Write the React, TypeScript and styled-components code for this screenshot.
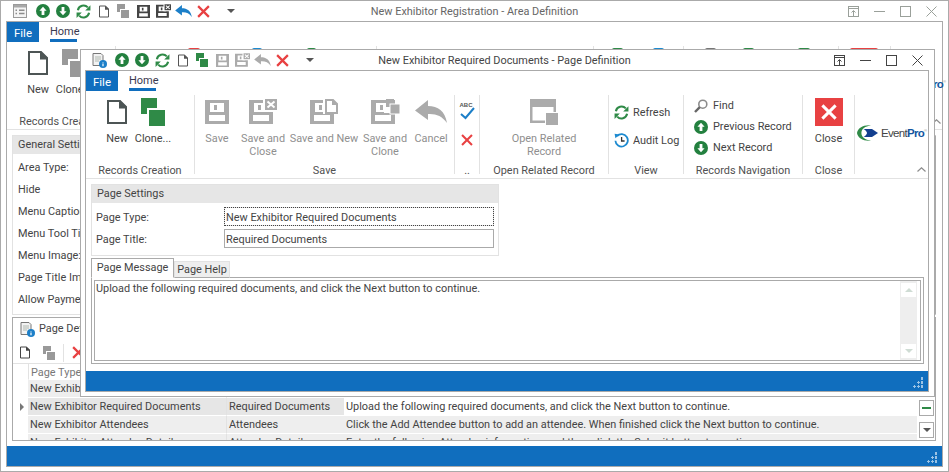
import React from 'react';
import styled, { createGlobalStyle } from 'styled-components';

const BLUE = '#106ebe';
const GREEN = '#2f8a47';
const RED = '#e84142';
const GRAY = '#ababab';
const LINE = '#aaaaaa';
const SOFT = '#e2e2e2';

const GlobalStyle = createGlobalStyle`
  html, body { margin: 0; padding: 0; background: #fff; }
  body { font-family: Roboto, "Liberation Sans", sans-serif; font-size: 10.9px; color: #444; }
  * { box-sizing: border-box; }
`;

/* ---------- icons ---------- */

const DocIcon = ({ w = 20, h = 24, color = '#4d5555' }: { w?: number; h?: number; color?: string }) => (
  <svg width={w} height={h} viewBox="0 0 20 24">
    <path d="M1 1H13L19 7V23H1Z" fill="#fff" stroke={color} strokeWidth="2" />
    <path d="M12 0L20 7V8.5H12Z" fill={color} />
  </svg>
);

const CloneIcon = ({ w = 24, h = 28, color = GREEN }: { w?: number; h?: number; color?: string }) => (
  <svg width={w} height={h} viewBox="0 0 24 28">
    <rect x="0" y="0" width="16" height="16" fill={color} />
    <rect x="7" y="11" width="18" height="18" fill={color} stroke="#fff" strokeWidth="2" />
  </svg>
);

const DISK = 'M0 0H24V24H0ZM5 3V12H19V3ZM9 5V10H12V5ZM4 15V21H20V15Z';

const SaveIcon = ({ s = 24, color = GRAY }: { s?: number; color?: string }) => (
  <svg width={s} height={s} viewBox="0 0 24 24">
    <path d={DISK} fill={color} fillRule="evenodd" />
  </svg>
);

const SaveCloseIcon = ({ w = 28, h = 25, color = GRAY }: { w?: number; h?: number; color?: string }) => (
  <svg width={w} height={h} viewBox="0 0 28 25">
    <path d={DISK} fill={color} fillRule="evenodd" transform="translate(0 1)" />
    <rect x="14" y="0" width="14" height="13" fill="#fff" />
    <rect x="16" y="0" width="12" height="11" fill={color} />
    <path d="M18.5 2.5L25.5 8.5M25.5 2.5L18.5 8.5" stroke="#fff" strokeWidth="2" />
  </svg>
);

const SaveNewIcon = () => (
  <svg width="28" height="25" viewBox="0 0 28 25">
    <path d={DISK} fill={GRAY} fillRule="evenodd" transform="translate(0 1)" />
    <path d="M13 0H28V15H13Z" fill="#fff" />
    <path d="M16 1H23L27 5V14H16Z" fill="#fff" stroke={GRAY} strokeWidth="2" />
    <path d="M22 0L28 6H22Z" fill={GRAY} />
  </svg>
);

const SaveCloneIcon = () => (
  <svg width="29" height="25" viewBox="0 0 29 25">
    <path d={DISK} fill={GRAY} fillRule="evenodd" transform="translate(0 1)" />
    <rect x="13" y="4" width="9" height="10" fill="#fff" />
    <rect x="15" y="0" width="8" height="8" fill={GRAY} />
    <rect x="19" y="5" width="10" height="10" fill={GRAY} stroke="#fff" strokeWidth="1" />
  </svg>
);

const ArrowCircle = ({ s = 14, dir }: { s?: number; dir: 'up' | 'down' }) => (
  <svg width={s} height={s} viewBox="0 0 14 14">
    <circle cx="7" cy="7" r="7" fill="#23803f" />
    <path
      d="M7 2.8L10.6 6.8H8.4V11H5.6V6.8H3.4Z"
      fill="#fff"
      transform={dir === 'down' ? 'rotate(180 7 7)' : undefined}
    />
  </svg>
);

const RefreshIcon = ({ s = 15 }: { s?: number }) => (
  <svg width={s} height={s} viewBox="0 0 16 16" fill="none">
    <path d="M2 6.6A6.2 6.2 0 0 1 12.6 3.6" stroke={GREEN} strokeWidth="2.2" />
    <path d="M15.4 1.2V7H9.8Z" fill={GREEN} />
    <path d="M14 9.4A6.2 6.2 0 0 1 3.4 12.4" stroke={GREEN} strokeWidth="2.2" />
    <path d="M0.6 14.8V9H6.2Z" fill={GREEN} />
  </svg>
);

const AuditIcon = () => (
  <svg width="15" height="15" viewBox="0 0 15 15" fill="none">
    <path d="M3 3.2A6.2 6.2 0 1 1 1.4 7.8" stroke="#1c8ad0" strokeWidth="1.8" />
    <path d="M0.6 0.8L5.4 1.4L1.4 5.2Z" fill="#1c8ad0" />
    <path d="M7.6 4V8H10.6" stroke="#333" strokeWidth="1.3" />
  </svg>
);

const FindIcon = () => (
  <svg width="14" height="14" viewBox="0 0 14 14" fill="none">
    <circle cx="8.8" cy="5.2" r="4" stroke="#8b8b8b" strokeWidth="1.6" />
    <path d="M5.8 8.2L1 13" stroke="#666" strokeWidth="2.4" />
  </svg>
);

const CrossIcon = ({ s = 14, color = RED, weight = 2.4 }: { s?: number; color?: string; weight?: number }) => (
  <svg width={s} height={s} viewBox="0 0 14 14">
    <path d="M1.2 1.2L12.8 12.8M12.8 1.2L1.2 12.8" stroke={color} strokeWidth={weight} />
  </svg>
);

const ReplyIcon = ({ w = 17, h = 12, color = GRAY }: { w?: number; h?: number; color?: string }) => (
  <svg width={w} height={h} viewBox="0 0 32 23">
    <path d="M13 0L0 10.5L13 20V14C21 13.5 27 16 32 23C30 11 23 6 13 6Z" fill={color} />
  </svg>
);

const ListIcon = () => (
  <svg width="14" height="14" viewBox="0 0 14 14" fill="none">
    <rect x="0.5" y="0.5" width="13" height="13" fill="#f4f4f4" stroke="#9a9a9a" />
    <rect x="1" y="1" width="12" height="2.5" fill="#a8a8a8" />
    <path d="M2.5 6.2H4M2.5 9.5H4M6 6.2H11.5M6 9.5H11.5" stroke="#8c8c8c" strokeWidth="1.4" />
  </svg>
);

const InfoDocIcon = () => (
  <svg width="15" height="15" viewBox="0 0 15 15" fill="none">
    <path d="M1 .5H9L11 2.5V12.5H1Z" fill="#f2f2f2" stroke="#777" />
    <path d="M3 4H9M3 6H9M3 8H7" stroke="#b0b8b0" strokeWidth="1" />
    <circle cx="11" cy="11" r="4" fill="#1c7fc8" />
    <path d="M11 9.6V9M11 10.6V13.2" stroke="#fff" strokeWidth="1.2" />
  </svg>
);

const RestoreIcon = ({ color }: { color: string }) => (
  <svg width="11" height="11" viewBox="0 0 11 11" fill="none">
    <rect x=".5" y=".5" width="10" height="10" stroke={color} />
    <path d="M0 2.5H11M5.5 10V5M3.5 6.5L5.5 4.5L7.5 6.5" stroke={color} />
  </svg>
);

const MinIcon = ({ color }: { color: string }) => (
  <svg width="11" height="11" viewBox="0 0 11 11"><path d="M0 5.5H11" stroke={color} /></svg>
);

const MaxIcon = ({ color }: { color: string }) => (
  <svg width="11" height="11" viewBox="0 0 11 11" fill="none"><rect x=".5" y=".5" width="10" height="10" stroke={color} /></svg>
);

const CloseGlyph = ({ color }: { color: string }) => (
  <svg width="11" height="11" viewBox="0 0 11 11"><path d="M.5 .5L10.5 10.5M10.5 .5L.5 10.5" stroke={color} /></svg>
);

const Chevron = () => (
  <svg width="9" height="5" viewBox="0 0 9 5" fill="none">
    <path d="M.5 4.5L4.5 .8L8.5 4.5" stroke="#8c8c8c" strokeWidth="1.2" />
  </svg>
);

const CaretDown = ({ color = '#555' }: { color?: string }) => (
  <svg width="8" height="4" viewBox="0 0 8 4"><path d="M0 0H8L4 4Z" fill={color} /></svg>
);

const OpenRelatedIcon = () => (
  <svg width="28" height="26" viewBox="0 0 28 26">
    <rect x="0" y="0" width="26" height="24" fill={GRAY} />
    <rect x="2.5" y="8" width="21" height="13.5" fill="#fff" />
    <rect x="15" y="13" width="13" height="13" fill="#fff" />
    <rect x="16" y="14" width="12" height="12" fill={GRAY} />
  </svg>
);

const SpellIcon = () => (
  <svg width="15" height="17" viewBox="0 0 15 17" fill="none">
    <path d="M1 11L5.5 15L14 5" stroke="#1c7fc8" strokeWidth="2" />
  </svg>
);

const Swoosh = () => (
  <svg width="22" height="16" viewBox="0 0 22 16">
    <path d="M14 .4C7 -.6 .5 3 0 8C.5 13 7 16.6 14 15.6C8 15 4.4 12 4.4 8C4.4 4 8 1 14 .4Z" fill="#2f8a47" />
    <path d="M6.5 4H15L21 8L15 12H6.5C9 10.5 10 9 10 8C10 7 9 5.5 6.5 4Z" fill="#123f8f" />
  </svg>
);

/* ---------- window chrome ---------- */

const Page = styled.div`
  position: relative;
  width: 949px;
  height: 472px;
  overflow: hidden;
  display: flex;
  flex-direction: column;
  padding: 0 5px 4px;
  border: 1px solid ${LINE};
  background: #fff;
`;

const Modal = styled.div`
  position: absolute;
  left: 79px;
  top: 48px;
  width: 855px;
  height: 348px;
  display: flex;
  flex-direction: column;
  padding: 0 5px 4px 4px;
  border: 1px solid ${LINE};
  background: #fff;
`;

const TitleBar = styled.div`
  height: 20px;
  flex: none;
  display: grid;
  grid-template-columns: 1fr auto 1fr;
  align-items: center;
`;

const Quick = styled.div`
  display: flex;
  align-items: center;
  padding-left: 4px;
`;

const QuickSlot = styled.div<{ $w?: number; $ml?: number }>`
  width: ${(p) => p.$w ?? 20}px;
  margin-left: ${(p) => p.$ml ?? 0}px;
  height: 20px;
  display: flex;
  align-items: center;
  justify-content: center;
`;

const WinTitle = styled.div<{ $dim?: boolean }>`
  color: ${(p) => (p.$dim ? '#666' : '#444')};
  white-space: nowrap;
  margin-left: ${(p) => (p.$dim ? 0 : -5)}px;
`;

const WinButtons = styled.div`
  display: flex;
  justify-content: flex-end;
  align-items: center;
  gap: 15px;
  padding-right: 6px;
`;

const Frame = styled.div`
  flex: 1;
  min-height: 0;
  display: flex;
  flex-direction: column;
  border: 1px solid ${LINE};
  background: #fff;
`;

const TabStrip = styled.div`
  height: 20px;
  flex: none;
  display: flex;
`;

const FileTab = styled.div`
  width: 32px;
  padding-top: 1px;
  background: ${BLUE};
  color: #fff;
  font-size: 11.5px;
  display: flex;
  align-items: center;
  justify-content: center;
`;

const HomeTab = styled.div`
  margin-left: 11px;
  width: 27px;
  height: 20px;
  border-bottom: 3px solid ${BLUE};
  color: #3a3a50;
  font-size: 11px;
  line-height: 20px;
  text-align: center;
  white-space: nowrap;
`;

const StatusBar = styled.div`
  height: 20px;
  flex: none;
  background: ${BLUE};
  display: flex;
  justify-content: flex-end;
  align-items: flex-end;
  padding: 0 4px 3px 0;
`;

const Grip = styled.div`
  width: 11px;
  height: 11px;
  background:
    radial-gradient(circle at 9px 1.5px, #9cc3e4 1.2px, transparent 1.3px),
    radial-gradient(circle at 5.5px 5.5px, #9cc3e4 1.2px, transparent 1.3px),
    radial-gradient(circle at 9px 5.5px, #9cc3e4 1.2px, transparent 1.3px),
    radial-gradient(circle at 1.5px 9.5px, #9cc3e4 1.2px, transparent 1.3px),
    radial-gradient(circle at 5.5px 9.5px, #9cc3e4 1.2px, transparent 1.3px),
    radial-gradient(circle at 9px 9.5px, #9cc3e4 1.2px, transparent 1.3px);
`;

/* ---------- ribbon ---------- */

const Ribbon = styled.div`
  position: relative;
  height: 88px;
  flex: none;
  display: flex;
  align-items: flex-start;
  padding-top: 4px;
  border-bottom: 1px solid ${SOFT};
`;

const Group = styled.div<{ $w: number; $plain?: boolean }>`
  width: ${(p) => p.$w}px;
  height: 79px;
  flex: none;
  display: flex;
  flex-direction: column;
  border-right: ${(p) => (p.$plain ? 'none' : `1px solid ${SOFT}`)};
`;

const GroupBody = styled.div<{ $pl?: number; $center?: boolean }>`
  height: 68px;
  display: flex;
  padding-left: ${(p) => p.$pl ?? 0}px;
  justify-content: ${(p) => (p.$center ? 'center' : 'flex-start')};
`;

const GroupLabel = styled.div`
  height: 11px;
  line-height: 16px;
  text-align: center;
  color: #505050;
  white-space: nowrap;
`;

const BigButton = styled.div<{ $w: number; $off?: boolean }>`
  width: ${(p) => p.$w}px;
  flex: none;
  display: flex;
  flex-direction: column;
  align-items: center;
  color: ${(p) => (p.$off ? '#8f8f8f' : '#444')};
`;

const BigIcon = styled.div`
  height: 33px;
  margin-bottom: 4px;
  display: flex;
  align-items: center;
  justify-content: center;
`;

const BigText = styled.div`
  line-height: 13px;
  text-align: center;
  white-space: nowrap;
`;

const SmallColumn = styled.div<{ $pl: number; $mt: number; $row: number }>`
  display: grid;
  grid-auto-rows: ${(p) => p.$row}px;
  margin-top: ${(p) => p.$mt}px;
  padding-left: ${(p) => p.$pl}px;
`;

const SmallButton = styled.div<{ $gap: number; $iw: number }>`
  display: grid;
  grid-template-columns: ${(p) => p.$iw}px auto;
  column-gap: ${(p) => p.$gap}px;
  align-items: center;
  white-space: nowrap;
`;

const SpellColumn = styled.div`
  width: 100%;
  display: flex;
  flex-direction: column;
  align-items: center;
`;

const SpellBox = styled.div`
  position: relative;
  height: 30px;
  margin-top: 8px;
`;

const SpellText = styled.span`
  position: absolute;
  left: 0;
  top: -1px;
  font-family: "Liberation Sans", sans-serif;
  font-size: 6px;
  font-weight: 700;
  color: #555;
`;

const SpellCross = styled.div`
  margin-top: 1px;
`;

const BigClose = styled.div`
  width: 28px;
  height: 28px;
  background: ${RED};
  display: flex;
  align-items: center;
  justify-content: center;
`;

const LogoBox = styled.div`
  display: flex;
  align-items: center;
  gap: 2px;
  padding: 30px 0 0 2px;
`;

const LogoText = styled.span`
  font-family: "Liberation Sans", sans-serif;
  font-size: 11.5px;
  letter-spacing: -0.7px;
  color: #444;
  white-space: nowrap;
  b { color: #14559f; font-weight: 700; }
  sup { font-size: 4px; color: #888; }
`;

const Collapse = styled.div`
  position: absolute;
  right: 2px;
  bottom: 6px;
  display: flex;
`;

/* the background ribbon is hidden by the dialog except for the top edge of its parts */
const PeekRow = styled.div`
  display: flex;
  align-items: flex-start;
  height: 60px;
`;

const PeekSep = styled.div<{ $ml: number }>`
  width: 1px;
  height: 20px;
  margin-left: ${(p) => p.$ml}px;
  background: ${SOFT};
  flex: none;
`;

const PeekCap = styled.div<{ $ml: number; $w: number; $c: string }>`
  width: ${(p) => p.$w}px;
  height: 6px;
  margin: 2px 0 0 ${(p) => p.$ml}px;
  background: ${(p) => p.$c};
  border-radius: 2px 2px 0 0;
  flex: none;
`;

const PeekLogo = styled.div`
  margin-left: -17px;
  flex: none;
`;

const BgCollapse = styled.div`
  position: absolute;
  right: 1px;
  bottom: 5px;
  display: flex;
`;

/* ---------- background form ---------- */

const BgContent = styled.div`
  flex: 1;
  min-height: 0;
  display: flex;
  flex-direction: column;
  gap: 2px;
  padding: 5px 6px 5px 5px;
`;

const BgGroup = styled.div`
  height: 180px;
  flex: none;
  border: 1px solid ${SOFT};
  border-right-color: ${LINE};
`;

const GroupHeader = styled.div`
  height: 18px;
  padding-left: 5px;
  line-height: 17px;
  background: #e6e6e6;
  color: #444;
`;

const FieldLabels = styled.div`
  display: grid;
  grid-auto-rows: 21.9px;
  padding: 3px 0 0 5px;
  align-items: center;
  white-space: nowrap;
`;

const Panel = styled.div`
  flex: 1;
  min-height: 0;
  overflow: hidden;
  border: 1px solid ${LINE};
  display: flex;
  flex-direction: column;
`;

const PanelTitle = styled.div`
  height: 24px;
  flex: none;
  display: flex;
  align-items: flex-start;
  gap: 4px;
  padding: 4px 0 0 7px;
  line-height: 13px;
`;

const PanelTools = styled.div`
  height: 22px;
  flex: none;
  display: flex;
  align-items: center;
  padding-left: 7px;
  border-bottom: 1px solid ${SOFT};
`;

const ToolSep = styled.div`
  width: 1px;
  height: 18px;
  margin: 0 8px 0 7px;
  background: ${SOFT};
`;

const ToolSlot = styled.div<{ $w: number }>`
  width: ${(p) => p.$w}px;
  display: flex;
  align-items: center;
`;

const GridWrap = styled.div`
  flex: 1;
  min-height: 0;
  display: flex;
`;

const GridTable = styled.div`
  flex: 1;
  min-width: 0;
  display: grid;
  grid-template-columns: 15px 198px 118px 1fr;
  grid-template-rows: 16px;
  grid-auto-rows: 18px;
  align-content: start;
`;

const Cell = styled.div<{ $bg?: string; $dim?: boolean; $left?: boolean }>`
  background: ${(p) => p.$bg ?? '#fff'};
  color: ${(p) => (p.$dim ? '#777' : '#444')};
  border-bottom: 1px solid #fff;
  border-left: ${(p) => (p.$left ? `1px solid ${SOFT}` : 'none')};
  padding-left: 2px;
  line-height: 18px;
  white-space: nowrap;
  overflow: hidden;
`;

const RowMark = styled.div`
  display: flex;
  align-items: center;
  justify-content: center;
  padding-left: 2px;
`;

const Triangle = styled.div`
  width: 0;
  height: 0;
  border-left: 4px solid #777;
  border-top: 4px solid transparent;
  border-bottom: 4px solid transparent;
`;

const SideButtons = styled.div`
  width: 18px;
  flex: none;
  display: flex;
  flex-direction: column;
  gap: 6px;
  padding: 36px 0 0 2px;
`;

const SideButton = styled.div`
  width: 15px;
  height: 16px;
  flex: none;
  border: 1px solid ${LINE};
  background: #fff;
  display: flex;
  align-items: center;
  justify-content: center;
`;

const MinusBar = styled.div`
  width: 9px;
  height: 2px;
  background: ${GREEN};
`;

/* ---------- dialog body ---------- */

const ModalBody = styled.div`
  flex: 1;
  min-height: 0;
  display: flex;
  flex-direction: column;
  padding: 5px 4px 6px 5px;
`;

const SettingsBox = styled.div`
  width: 408px;
  height: 72px;
  flex: none;
  border: 1px solid ${SOFT};
`;

const SettingRows = styled.div`
  display: grid;
  grid-template-columns: 128px 270px;
  grid-auto-rows: 22px;
  padding: 4px 0 0 4px;
`;

const RowLabel = styled.div`
  line-height: 21px;
`;

const TextBox = styled.div<{ $focus?: boolean }>`
  height: 19px;
  padding-left: 1px;
  line-height: 19px;
  border: 1px solid ${(p) => (p.$focus ? SOFT : LINE)};
  outline: ${(p) => (p.$focus ? '1px dotted #444' : 'none')};
  outline-offset: -1px;
  white-space: nowrap;
`;

const TabRow = styled.div`
  height: 20px;
  flex: none;
  margin-top: 2px;
  display: flex;
  align-items: flex-end;
  position: relative;
  z-index: 1;
`;

const PageTab = styled.div<{ $active?: boolean }>`
  height: ${(p) => (p.$active ? 20 : 17)}px;
  width: ${(p) => (p.$active ? 83 : 56)}px;
  text-align: center;
  line-height: ${(p) => (p.$active ? 17 : 15)}px;
  background: ${(p) => (p.$active ? '#fff' : '#eeeeee')};
  border: 1px solid ${(p) => (p.$active ? LINE : SOFT)};
  border-bottom: ${(p) => (p.$active ? '1px solid #fff' : `1px solid ${LINE}`)};
  white-space: nowrap;
`;

const Memo = styled.div`
  width: 833px;
  height: 87px;
  flex: none;
  margin-top: -1px;
  padding: 2px;
  border: 1px solid ${LINE};
`;

const MemoInner = styled.div`
  height: 100%;
  display: flex;
  border: 1px solid ${LINE};
`;

const MemoText = styled.div`
  flex: 1;
  padding: 1px 1px 0;
  line-height: 14px;
  white-space: nowrap;
`;

const ScrollTrack = styled.div`
  width: 17px;
  flex: none;
  margin-right: 3px;
  background: #eeeeee;
  display: flex;
  flex-direction: column;
  justify-content: space-between;
  padding: 2px 1px;
`;

const ScrollBtn = styled.div<{ $down?: boolean }>`
  height: 14px;
  background: #fff;
  display: flex;
  align-items: center;
  justify-content: center;
  svg { transform: ${(p) => (p.$down ? 'none' : 'rotate(180deg)')}; }
`;

/* ---------- pieces used twice ---------- */

const QuickBar = ({ dialog }: { dialog?: boolean }) => (
  <Quick>
    <QuickSlot>{dialog ? <InfoDocIcon /> : <ListIcon />}</QuickSlot>
    <QuickSlot $ml={3}><ArrowCircle dir="up" /></QuickSlot>
    <QuickSlot><ArrowCircle dir="down" /></QuickSlot>
    <QuickSlot><RefreshIcon /></QuickSlot>
    <QuickSlot $ml={1}><DocIcon w={10} h={13} color="#555" /></QuickSlot>
    <QuickSlot $ml={-1}><CloneIcon w={12} h={14} color={dialog ? GREEN : '#999'} /></QuickSlot>
    <QuickSlot>
      <SaveIcon s={13} color={dialog ? GRAY : '#444'} />
    </QuickSlot>
    <QuickSlot>
      {dialog ? <SaveCloseIcon w={15} h={14} /> : <SaveCloseIcon w={15} h={14} color="#444" />}
    </QuickSlot>
    <QuickSlot><ReplyIcon color={dialog ? GRAY : '#1c7fc8'} /></QuickSlot>
    <QuickSlot><CrossIcon s={13} /></QuickSlot>
    <QuickSlot $ml={12} $w={12}><CaretDown /></QuickSlot>
  </Quick>
);

const Buttons = ({ color }: { color: string }) => (
  <WinButtons>
    <RestoreIcon color={color} />
    <MinIcon color={color} />
    <MaxIcon color={color} />
    <CloseGlyph color={color} />
  </WinButtons>
);

const Logo = () => (
  <LogoBox>
    <Swoosh />
    <LogoText>Event<b>Pro</b><sup>®</sup></LogoText>
  </LogoBox>
);

const peeks = [
  { sep: true, ml: 0 },
  { ml: 72, w: 12, c: RED },
  { ml: 52, w: 10, c: '#1c8ad0' },
  { ml: 45, w: 9, c: GREEN },
  { sep: true, ml: 60 },
  { sep: true, ml: 216 },
  { ml: 18, w: 11, c: GREEN },
  { ml: 30, w: 11, c: '#1c8ad0' },
  { sep: true, ml: 19 },
  { ml: 21, w: 11, c: '#777' },
  { ml: 27, w: 11, c: GREEN },
  { ml: 44, w: 12, c: GREEN },
  { sep: true, ml: 28 },
  { ml: 11, w: 28, c: RED },
  { sep: true, ml: 12 },
];

const labels = ['Area Type:', 'Hide', 'Menu Caption:', 'Menu Tool Tip:', 'Menu Image:', 'Page Title Image:', 'Allow Payment:'];

const rows = [
  ['New Exhibitor Contact', 'Contact', 'Enter your contact information.', '#eeeeee', '#eeeeee'],
  ['New Exhibitor Required Documents', 'Required Documents', 'Upload the following required documents, and click the Next button to continue.', '#e6e6e6', '#fff'],
  ['New Exhibitor Attendees', 'Attendees', 'Click the Add Attendee button to add an attendee. When finished click the Next button to continue.', '#eeeeee', '#eeeeee'],
  ['New Exhibitor Attendee Details', 'Attendee Details', 'Enter the following Attendee information, and then click the Submit button to continue.', '#eeeeee', '#eeeeee'],
];

const App = () => (
  <>
    <GlobalStyle />
    <Page>
      <TitleBar>
        <QuickBar />
        <WinTitle $dim>New Exhibitor Registration - Area Definition</WinTitle>
        <Buttons color="#9aa09a" />
      </TitleBar>
      <Frame>
        <TabStrip>
          <FileTab>File</FileTab>
          <HomeTab>Home</HomeTab>
        </TabStrip>
        <Ribbon>
          <Group $w={108} $plain>
            <GroupBody $pl={14}>
              <BigButton $w={34}>
                <BigIcon><DocIcon /></BigIcon>
                <BigText>New</BigText>
              </BigButton>
              <BigButton $w={38}>
                <BigIcon><CloneIcon color="#999" /></BigIcon>
                <BigText>Clone...</BigText>
              </BigButton>
            </GroupBody>
            <GroupLabel>Records Creation</GroupLabel>
          </Group>
          <PeekRow>
            {peeks.map((p, i) => (p.sep
              ? <PeekSep key={i} $ml={p.ml} />
              : <PeekCap key={i} $ml={p.ml} $w={p.w as number} $c={p.c as string} />))}
            <PeekLogo><Logo /></PeekLogo>
          </PeekRow>
          <BgCollapse><Chevron /></BgCollapse>
        </Ribbon>
        <BgContent>
          <BgGroup>
            <GroupHeader>General Settings</GroupHeader>
            <FieldLabels>
              {labels.map((l) => <div key={l}>{l}</div>)}
            </FieldLabels>
          </BgGroup>
          <Panel>
            <PanelTitle>
              <InfoDocIcon />
              <span>Page Definitions</span>
            </PanelTitle>
            <PanelTools>
              <ToolSlot $w={23}><DocIcon w={10} h={13} color="#444" /></ToolSlot>
              <ToolSlot $w={13}><CloneIcon w={12} h={14} color="#999" /></ToolSlot>
              <ToolSep />
              <CrossIcon s={13} />
            </PanelTools>
            <GridWrap>
              <GridTable>
                <div />
                <Cell $dim $left>Page Type</Cell>
                <Cell $dim>Page Title</Cell>
                <Cell $dim>Page Message</Cell>
                {rows.map((r, i) => (
                  <React.Fragment key={r[0]}>
                    <RowMark>{i === 1 ? <Triangle /> : null}</RowMark>
                    <Cell $bg={r[3]}>{r[0]}</Cell>
                    <Cell $bg={r[3]} $left>{r[1]}</Cell>
                    <Cell $bg={r[4]}>{r[2]}</Cell>
                  </React.Fragment>
                ))}
              </GridTable>
              <SideButtons>
                <SideButton><MinusBar /></SideButton>
                <SideButton><CaretDown /></SideButton>
              </SideButtons>
            </GridWrap>
          </Panel>
        </BgContent>
        <StatusBar><Grip /></StatusBar>
      </Frame>

      <Modal>
        <TitleBar>
          <QuickBar dialog />
          <WinTitle>New Exhibitor Required Documents - Page Definition</WinTitle>
          <Buttons color="#444" />
        </TitleBar>
        <Frame>
          <TabStrip>
            <FileTab>File</FileTab>
            <HomeTab>Home</HomeTab>
          </TabStrip>
          <Ribbon>
            <Group $w={109}>
              <GroupBody $pl={14}>
                <BigButton $w={34}>
                  <BigIcon><DocIcon /></BigIcon>
                  <BigText>New</BigText>
                </BigButton>
                <BigButton $w={38}>
                  <BigIcon><CloneIcon /></BigIcon>
                  <BigText>Clone...</BigText>
                </BigButton>
              </GroupBody>
              <GroupLabel>Records Creation</GroupLabel>
            </Group>
            <Group $w={260}>
              <GroupBody $pl={1}>
                <BigButton $w={42} $off>
                  <BigIcon><SaveIcon /></BigIcon>
                  <BigText>Save</BigText>
                </BigButton>
                <BigButton $w={50} $off>
                  <BigIcon><SaveCloseIcon /></BigIcon>
                  <BigText>Save and<br />Close</BigText>
                </BigButton>
                <BigButton $w={72} $off>
                  <BigIcon><SaveNewIcon /></BigIcon>
                  <BigText>Save and New</BigText>
                </BigButton>
                <BigButton $w={50} $off>
                  <BigIcon><SaveCloneIcon /></BigIcon>
                  <BigText>Save and<br />Clone</BigText>
                </BigButton>
                <BigButton $w={42} $off>
                  <BigIcon><ReplyIcon w={32} h={23} /></BigIcon>
                  <BigText>Cancel</BigText>
                </BigButton>
              </GroupBody>
              <GroupLabel>Save</GroupLabel>
            </Group>
            <Group $w={25}>
              <GroupBody>
                <SpellColumn>
                  <SpellBox>
                    <SpellText>ABC</SpellText>
                    <SpellIcon />
                  </SpellBox>
                  <SpellCross><CrossIcon s={12} /></SpellCross>
                </SpellColumn>
              </GroupBody>
              <GroupLabel>..</GroupLabel>
            </Group>
            <Group $w={129}>
              <GroupBody $center>
                <BigButton $w={100} $off>
                  <BigIcon><OpenRelatedIcon /></BigIcon>
                  <BigText>Open Related<br />Record</BigText>
                </BigButton>
              </GroupBody>
              <GroupLabel>Open Related Record</GroupLabel>
            </Group>
            <Group $w={75}>
              <GroupBody>
                <SmallColumn $pl={5} $mt={3} $row={28}>
                  <SmallButton $iw={15} $gap={4}><RefreshIcon />Refresh</SmallButton>
                  <SmallButton $iw={15} $gap={4}><AuditIcon />Audit Log</SmallButton>
                </SmallColumn>
              </GroupBody>
              <GroupLabel>View</GroupLabel>
            </Group>
            <Group $w={119}>
              <GroupBody>
                <SmallColumn $pl={10} $mt={0} $row={21}>
                  <SmallButton $iw={14} $gap={5}><FindIcon />Find</SmallButton>
                  <SmallButton $iw={14} $gap={5}><ArrowCircle dir="up" />Previous Record</SmallButton>
                  <SmallButton $iw={14} $gap={5}><ArrowCircle dir="down" />Next Record</SmallButton>
                </SmallColumn>
              </GroupBody>
              <GroupLabel>Records Navigation</GroupLabel>
            </Group>
            <Group $w={52}>
              <GroupBody $center>
                <BigButton $w={50}>
                  <BigIcon><BigClose><CrossIcon s={16} color="#fff" weight={2.6} /></BigClose></BigIcon>
                  <BigText>Close</BigText>
                </BigButton>
              </GroupBody>
              <GroupLabel>Close</GroupLabel>
            </Group>
            <Group $w={72} $plain>
              <Logo />
            </Group>
            <Collapse><Chevron /></Collapse>
          </Ribbon>
          <ModalBody>
            <SettingsBox>
              <GroupHeader>Page Settings</GroupHeader>
              <SettingRows>
                <RowLabel>Page Type:</RowLabel>
                <TextBox $focus>New Exhibitor Required Documents</TextBox>
                <RowLabel>Page Title:</RowLabel>
                <TextBox>Required Documents</TextBox>
              </SettingRows>
            </SettingsBox>
            <TabRow>
              <PageTab $active>Page Message</PageTab>
              <PageTab>Page Help</PageTab>
            </TabRow>
            <Memo>
              <MemoInner>
                <MemoText>Upload the following required documents, and click the Next button to continue.</MemoText>
                <ScrollTrack>
                  <ScrollBtn><CaretDown color="#cfdcd4" /></ScrollBtn>
                  <ScrollBtn $down><CaretDown color="#cfdcd4" /></ScrollBtn>
                </ScrollTrack>
              </MemoInner>
            </Memo>
          </ModalBody>
          <StatusBar><Grip /></StatusBar>
        </Frame>
      </Modal>
    </Page>
  </>
);

export default App;
